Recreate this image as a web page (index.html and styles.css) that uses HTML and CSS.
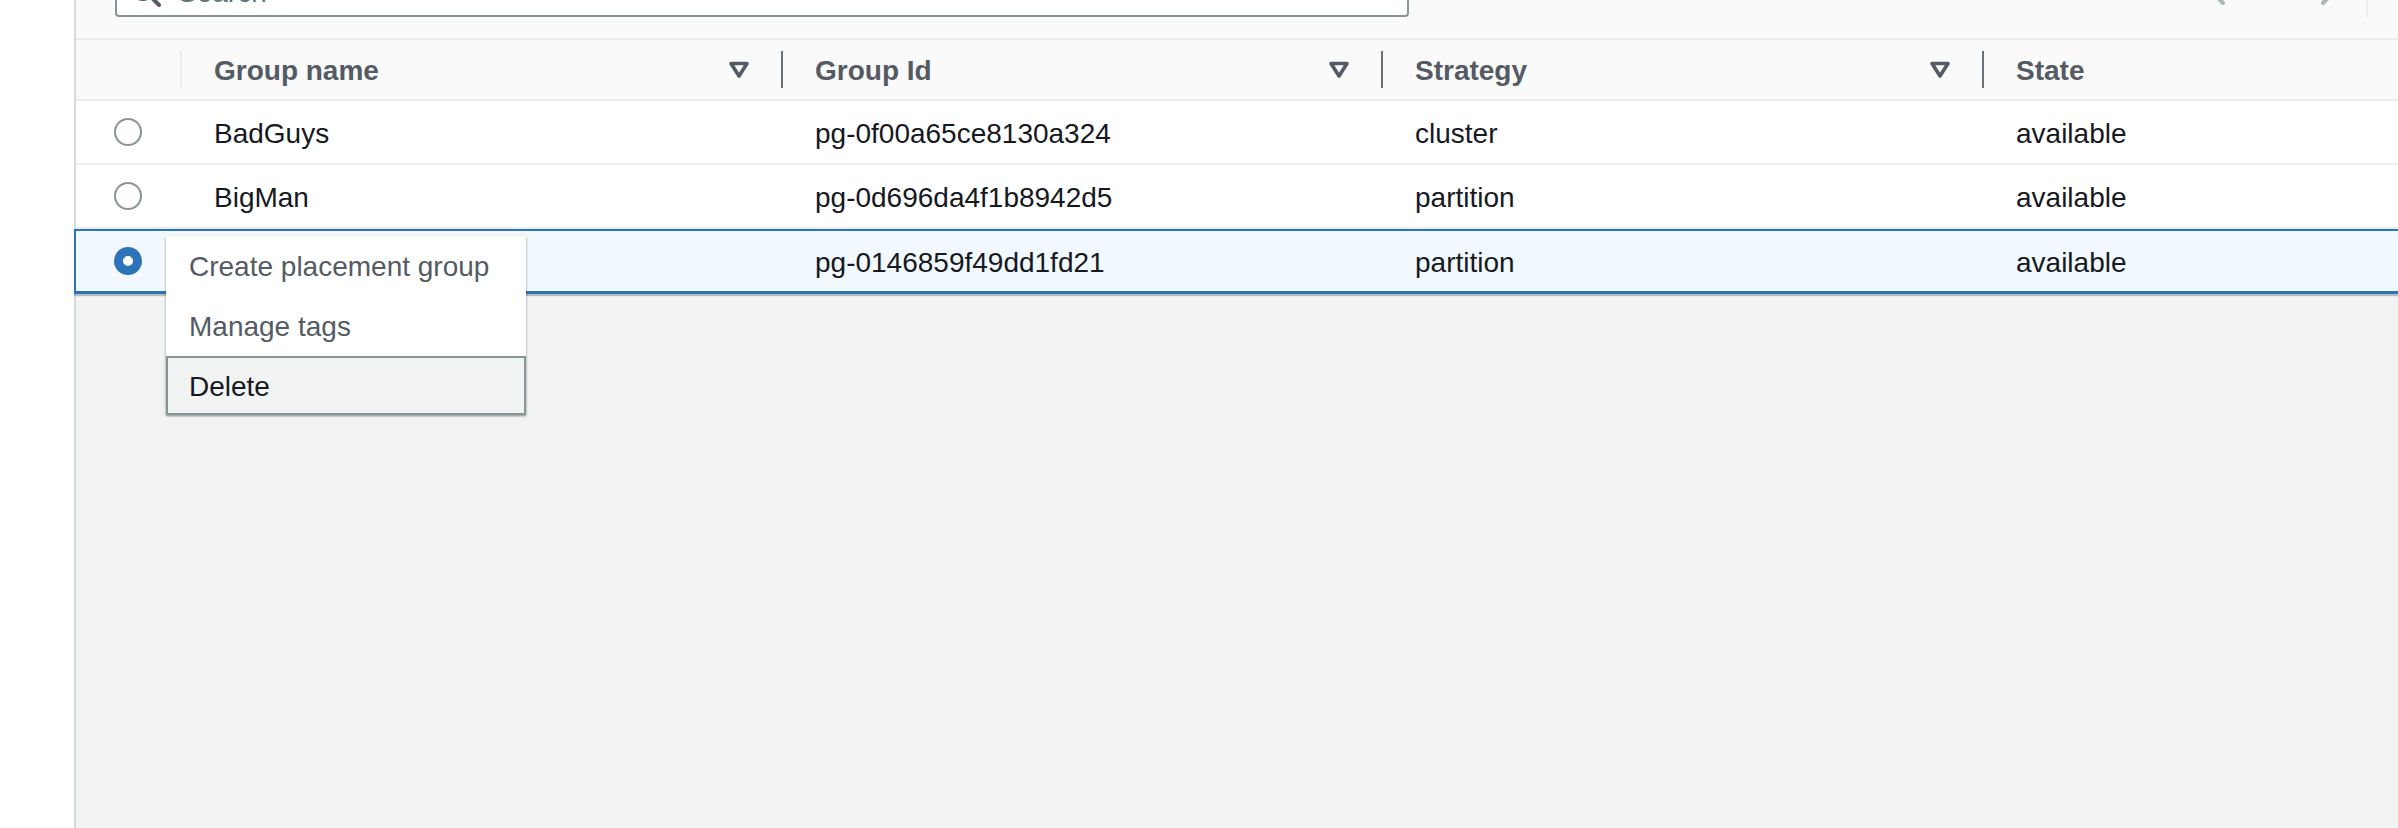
FILE: index.html
```html
<!DOCTYPE html>
<html lang="en">
<head>
<meta charset="utf-8">
<title>Placement groups</title>
<link rel="stylesheet" href="styles.css">
</head>
<body>
<div class="page">
  <div class="gutter"></div>
  <div class="content">
    <div class="toolbar">
      <div class="search">
        <svg class="search-icon" viewBox="0 0 16 16" width="32" height="32"><circle cx="7" cy="7" r="5" fill="none" stroke="#545b64" stroke-width="2"/><path d="M10.5 10.5 15 15" stroke="#545b64" stroke-width="2" stroke-linecap="round"/></svg>
        <span class="search-text">Search</span>
      </div>
      <div class="pager">
        <svg class="chev" viewBox="0 0 16 16" width="32" height="32"><path d="M11 2 5 8l6 6" fill="none" stroke="#aab7b8" stroke-width="2" stroke-linecap="round" stroke-linejoin="round"/></svg>
        <svg class="chev chev-right" viewBox="0 0 16 16" width="32" height="32"><path d="M5 2l6 6-6 6" fill="none" stroke="#aab7b8" stroke-width="2" stroke-linecap="round" stroke-linejoin="round"/></svg>
        <span class="pager-sep"></span>
        <svg class="gear" viewBox="0 0 16 16" width="32" height="32"><circle cx="8" cy="8" r="5" fill="none" stroke="#545b64" stroke-width="2"/></svg>
      </div>
    </div>

    <div class="thead">
      <div class="th th-select"></div>
      <div class="th"><span class="sep sep-light"></span><span class="th-label">Group name</span><svg class="sort" viewBox="0 0 16 16" width="32" height="32"><path d="M4 4.75h8L8 11z" fill="none" stroke="#545b64" stroke-width="1.8" stroke-linejoin="round"/></svg></div>
      <div class="th"><span class="sep"></span><span class="th-label">Group Id</span><svg class="sort" viewBox="0 0 16 16" width="32" height="32"><path d="M4 4.75h8L8 11z" fill="none" stroke="#545b64" stroke-width="1.8" stroke-linejoin="round"/></svg></div>
      <div class="th"><span class="sep"></span><span class="th-label">Strategy</span><svg class="sort" viewBox="0 0 16 16" width="32" height="32"><path d="M4 4.75h8L8 11z" fill="none" stroke="#545b64" stroke-width="1.8" stroke-linejoin="round"/></svg></div>
      <div class="th"><span class="sep"></span><span class="th-label">State</span></div>
    </div>

    <div class="row">
      <div class="td td-select"><span class="radio"></span></div>
      <div class="td">BadGuys</div>
      <div class="td">pg-0f00a65ce8130a324</div>
      <div class="td">cluster</div>
      <div class="td">available</div>
    </div>
    <div class="row">
      <div class="td td-select"><span class="radio"></span></div>
      <div class="td">BigMan</div>
      <div class="td">pg-0d696da4f1b8942d5</div>
      <div class="td">partition</div>
      <div class="td">available</div>
    </div>
    <div class="row row-selected">
      <div class="td td-select"><span class="radio radio-checked"></span></div>
      <div class="td"></div>
      <div class="td">pg-0146859f49dd1fd21</div>
      <div class="td">partition</div>
      <div class="td">available</div>
    </div>

    <ul class="menu">
      <li class="menu-item">Create placement group</li>
      <li class="menu-item">Manage tags</li>
      <li class="menu-item menu-item-active">Delete</li>
    </ul>
  </div>
</div>
</body>
</html>
```
FILE: styles.css
```css
* { box-sizing: border-box; }

html, body {
  margin: 0;
  padding: 0;
  background: #ffffff;
  overflow: hidden;
}

body {
  font-family: "Liberation Sans", Arial, sans-serif;
  font-size: 28px;
  color: #16191f;
}

.page {
  display: grid;
  grid-template-columns: 74px 1fr;
  height: 828px;
}

.gutter {
  background: #ffffff;
}

.content {
  position: relative;
  background: #f2f3f3;
  border-left: 2px solid #d5dbdb;
  min-width: 0;
}

/* toolbar */
.toolbar {
  display: flex;
  align-items: flex-start;
  height: 40px;
  background: #fafafa;
  border-bottom: 2px solid #eaeded;
  overflow: hidden;
}

.search {
  flex: 0 0 1294px;
  height: 64px;
  margin-top: -47px;
  margin-left: 39px;
  display: flex;
  align-items: flex-end;
  padding: 0 12px 8px 12px;
  background: #ffffff;
  border: 2px solid #879596;
  border-radius: 4px;
}

.search-icon {
  flex: 0 0 32px;
}

.search-text {
  margin-left: 17px;
  line-height: 28px;
  color: #687078;
}

.pager {
  margin-left: auto;
  margin-right: -30px;
  display: flex;
  align-items: flex-start;
  flex-shrink: 0;
}

.chev {
  margin-top: -25px;
  flex-shrink: 0;
}

.chev-right {
  margin-left: 80px;
}

.pager-sep {
  width: 2px;
  height: 17px;
  margin-left: 21px;
  background: #eaeded;
}

.gear {
  margin-left: 28px;
  margin-top: -22px;
  flex-shrink: 0;
}

/* table header */
.thead,
.row {
  display: grid;
  grid-template-columns: 104px 601px 600px 601px 1fr;
}

.thead {
  height: 61px;
  background: #fafafa;
  border-bottom: 2px solid #eaeded;
}

.th {
  display: flex;
  align-items: center;
  padding-right: 26px;
  font-weight: bold;
  color: #545b64;
}

.sep {
  flex: 0 0 2px;
  height: 37px;
  background: #687078;
}

.sep-light {
  background: #eaeded;
}

.th-label {
  margin-left: 32px;
  padding-top: 3px;
  flex: 1;
}

.sort {
  flex: 0 0 32px;
}

/* rows */
.row {
  height: 64px;
  background: #ffffff;
  border-bottom: 2px solid #eaeded;
}

.td {
  display: flex;
  align-items: center;
  padding-left: 34px;
  padding-top: 3px;
  white-space: nowrap;
}

.td-select {
  justify-content: center;
  padding-left: 0;
  padding-top: 0;
}

.radio {
  width: 28px;
  height: 28px;
  border-radius: 50%;
  border: 2px solid #879596;
  background: #ffffff;
}

.radio-checked {
  border: 9px solid #2e72b8;
}

.row-selected {
  height: 65px;
  margin-left: -2px;
  background: #f1f9fe;
  border: 2px solid #2e72b8;
  border-right: none;
  border-bottom-width: 3px;
  box-shadow: 0 2px 1px rgba(0, 28, 36, 0.25);
}

/* context menu */
.menu {
  position: absolute;
  left: 90px;
  top: 236px;
  width: 360px;
  margin: 0;
  padding: 0;
  list-style: none;
  background: #ffffff;
  box-shadow: 0 1px 2px rgba(0, 28, 36, 0.3), 1px 1px 2px rgba(0, 28, 36, 0.1), -1px 1px 2px rgba(0, 28, 36, 0.1);
}

.menu-item {
  height: 60px;
  display: flex;
  align-items: center;
  padding-left: 21px;
  padding-top: 2px;
  border: 2px solid transparent;
  color: #545b64;
  white-space: nowrap;
}

.menu-item-active {
  height: 59px;
  background: #f2f3f3;
  border-color: #879596;
  color: #16191f;
}
```
